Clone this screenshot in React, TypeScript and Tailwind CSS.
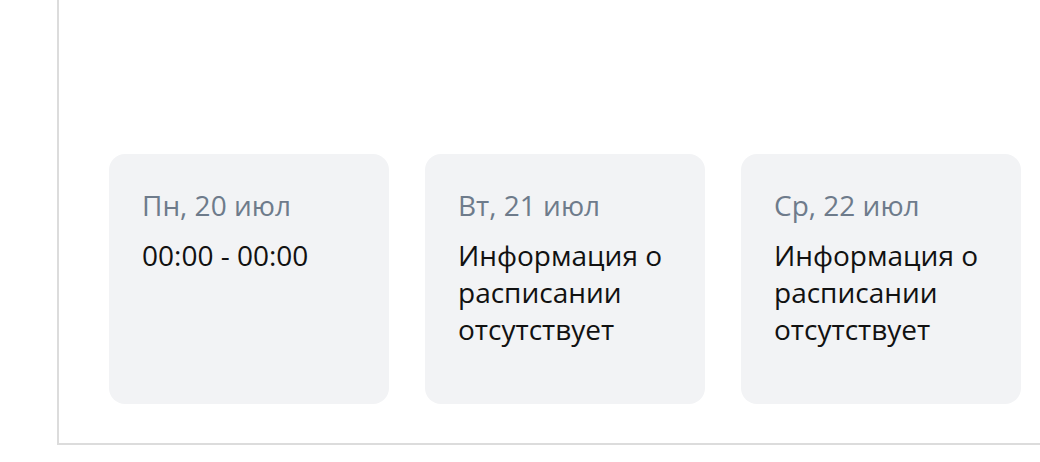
const days = [
  { date: "Пн, 20 июл", info: "00:00 - 00:00" },
  { date: "Вт, 21 июл", info: "Информация о расписании отсутствует" },
  { date: "Ср, 22 июл", info: "Информация о расписании отсутствует" },
];

export default function App() {
  return (
    <div className="h-[462px] w-[1040px] overflow-hidden bg-white pl-[57px] font-['Open_Sans',sans-serif]">
      <div className="h-[445px] border-b-2 border-l-2 border-[#dcdcdc] pl-[50px] pt-[154px]">
        <div className="flex gap-9">
          {days.map((d) => (
            <div
              key={d.date}
              className="h-[250px] w-[280px] shrink-0 rounded-2xl bg-[#f2f3f5] px-[33px] pt-[33px]"
            >
              <div className="text-[28px] leading-[36px] text-[#6e7b8b]">{d.date}</div>
              <div className="mt-[14px] text-[28px] leading-[37px] text-[#111]">{d.info}</div>
            </div>
          ))}
        </div>
      </div>
    </div>
  );
}
